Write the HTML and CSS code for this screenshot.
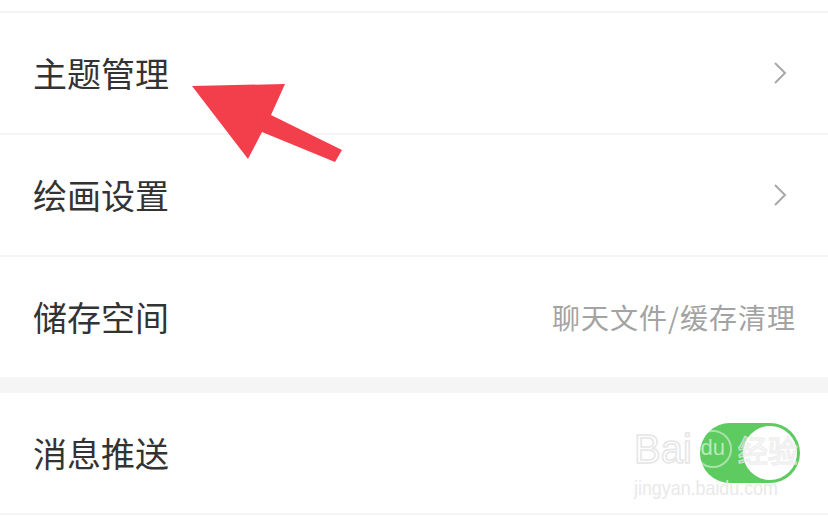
FILE: index.html
```html
<!DOCTYPE html>
<html lang="zh-CN">
<head>
    <meta charset="UTF-8">
    <meta name="viewport" content="width=device-width, initial-scale=1.0">
    <title>设置</title>
    <link rel="stylesheet" href="styles.css">
</head>
<body>
    <main class="settings">
        <div class="top-space"></div>

        <section class="group">
            <div class="row">
                <span class="label">主题管理</span>
                <svg class="chevron" width="14" height="24" viewBox="0 0 14 24">
                    <polyline points="2,2 12,12 2,22" fill="none" stroke="#a8a8a8" stroke-width="2"/>
                </svg>
            </div>
            <div class="row">
                <span class="label">绘画设置</span>
                <svg class="chevron" width="14" height="24" viewBox="0 0 14 24">
                    <polyline points="2,2 12,12 2,22" fill="none" stroke="#a8a8a8" stroke-width="2"/>
                </svg>
            </div>
            <div class="row">
                <span class="label">储存空间</span>
                <span class="hint">聊天文件/缓存清理</span>
            </div>
        </section>

        <div class="gap"></div>

        <section class="group">
            <div class="row">
                <span class="label">消息推送</span>
                <div class="toggle on">
                    <div class="knob"></div>
                </div>
            </div>
        </section>

        <!-- 红色箭头标注 -->
        <svg class="arrow" width="828" height="519" viewBox="0 0 828 519">
            <polygon points="192,86 285,84 271,115 342,150 335,162 262,132 248,159" fill="#f33e4b"/>
        </svg>

        <!-- 水印 -->
        <div class="watermark">
            <div class="wm-line">
                <span class="wm-bai">Bai</span><span class="wm-du">du</span><span class="wm-jy">经验</span>
            </div>
            <div class="wm-url">jingyan.baidu.com</div>
        </div>
    </main>
</body>
</html>
```

FILE: styles.css
```css
body {
    margin: 0;
    background-color: #ffffff;
    font-family: "Noto Sans CJK SC", "Noto Sans", sans-serif;
    color: #333333;
}

.settings {
    position: relative;
    width: 828px;
    height: 519px;
    overflow: hidden;
}

.top-space {
    height: 11px;
    border-bottom: 2px solid #f4f4f4;
}

.row {
    display: flex;
    align-items: center;
    justify-content: space-between;
    height: 122px;
    padding: 0 33px;
    border-bottom: 2px solid #f4f4f4;
    box-sizing: border-box;
}

.group .row:last-child {
    border-bottom: none;
    height: 120px;
}

.group:last-of-type .row:last-child {
    border-bottom: 2px solid #f4f4f4;
    height: 122px;
}

.label {
    font-size: 34px;
    line-height: 1;
    color: #333333;
}

.chevron {
    margin-right: 8px;
}

.hint {
    font-size: 28px;
    letter-spacing: 1px;
    color: #a3a3a3;
    margin-right: -1px;
}

.gap {
    height: 16px;
    background-color: #f5f5f5;
}

/* 开关 */
.toggle {
    width: 100px;
    height: 60px;
    border-radius: 30px;
    background-color: #5dcb60;
    display: flex;
    align-items: center;
    justify-content: flex-end;
    padding: 0 3px;
    box-sizing: border-box;
    margin-right: -5px;
}

.knob {
    width: 54px;
    height: 54px;
    border-radius: 50%;
    background-color: #ffffff;
}

.arrow {
    position: absolute;
    left: 0;
    top: 0;
}

.watermark {
    position: absolute;
    left: 634px;
    top: 424px;
    opacity: 0.85;
    color: rgba(255, 255, 255, 0.6);
    font-family: "Liberation Sans", sans-serif;
}

.wm-line {
    display: flex;
    align-items: center;
    height: 50px;
}

.wm-bai {
    font-size: 40px;
    color: transparent;
    -webkit-text-stroke: 1.5px #e2e2e2;
}

.wm-du {
    display: inline-block;
    width: 34px;
    height: 34px;
    border-radius: 50%;
    border: 2px solid rgba(255, 255, 255, 0.55);
    text-align: center;
    line-height: 32px;
    font-size: 22px;
    color: rgba(255, 255, 255, 0.7);
    margin: 0 6px 0 2px;
}

.wm-jy {
    font-family: "Noto Sans CJK SC", sans-serif;
    font-size: 30px;
    color: transparent;
    -webkit-text-stroke: 1.5px rgba(235, 235, 235, 0.9);
}

.wm-url {
    font-size: 21px;
    color: #e6e6e6;
    transform: scaleX(0.85);
    transform-origin: left;
    margin-top: 2px;
}
```
